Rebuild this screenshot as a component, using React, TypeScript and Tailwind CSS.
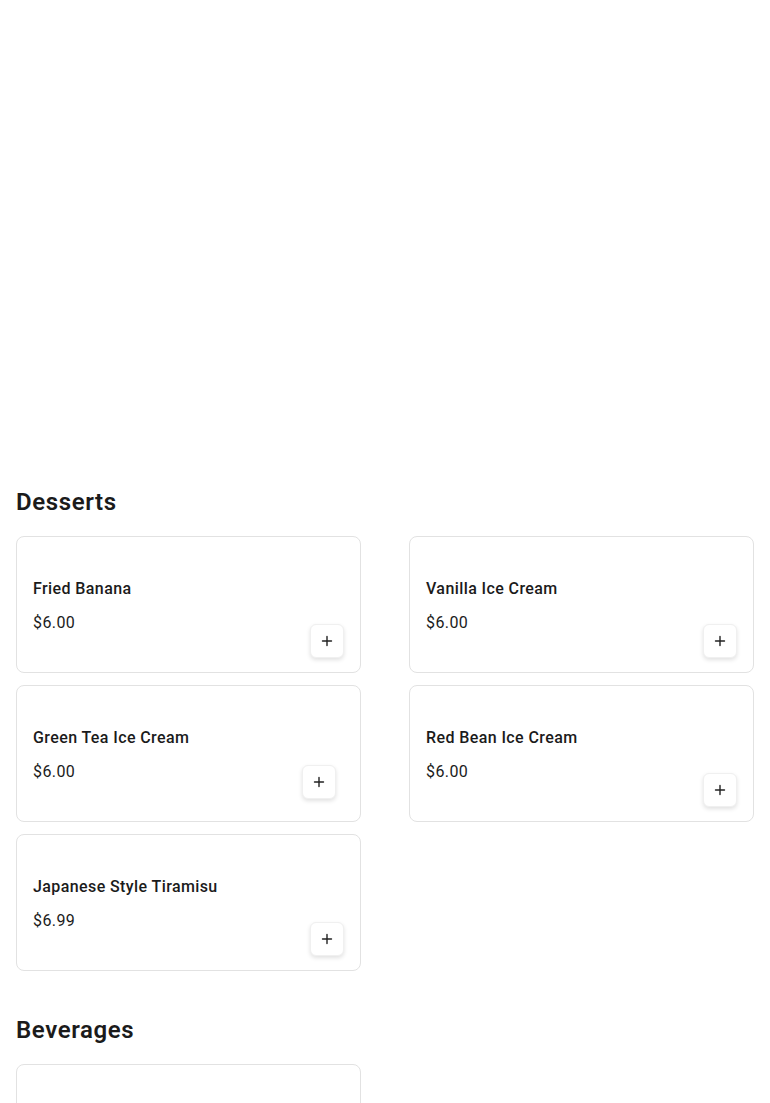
import React from "react";

type Item = { name: string; price: string; btn: string };

const sections: { title: string; items: Item[] }[] = [
	{
		title: "Desserts",
		items: [
			{ name: "Fried Banana", price: "$6.00", btn: "right-4 bottom-[14px]" },
			{ name: "Vanilla Ice Cream", price: "$6.00", btn: "right-4 bottom-[14px]" },
			{ name: "Green Tea Ice Cream", price: "$6.00", btn: "right-6 bottom-[22px]" },
			{ name: "Red Bean Ice Cream", price: "$6.00", btn: "right-4 bottom-[14px]" },
			{ name: "Japanese Style Tiramisu", price: "$6.99", btn: "right-4 bottom-[14px]" },
		],
	},
	{
		title: "Beverages",
		items: [{ name: "", price: "", btn: "" }],
	},
];

function PlusIcon() {
	return (
		<svg width="12" height="12" viewBox="0 0 12 12" fill="none" stroke="#222" strokeWidth="1.4" strokeLinecap="round">
			<path d="M6 1.5v9M1.5 6h9" />
		</svg>
	);
}

function MenuCard({ item }: { item: Item }) {
	return (
		<div className="relative h-[137px] border border-[#e2e2e2] rounded-lg bg-white px-4 pt-[40px]">
			{item.name && (
				<>
					<div className="text-base leading-6 font-medium tracking-wide text-[#1b1b1b]">{item.name}</div>
					<div className="mt-[10px] text-base leading-6 tracking-wide text-[#1b1b1b]">{item.price}</div>
					<button
						className={`absolute ${item.btn} w-[34px] h-[34px] flex items-center justify-center bg-white rounded-md border border-[#f0f0f0] shadow-[0_2px_4px_rgba(0,0,0,0.12)]`}
					>
						<PlusIcon />
					</button>
				</>
			)}
		</div>
	);
}

export default function App() {
	return (
		<div className="bg-white min-h-screen font-['Roboto',sans-serif] text-[#1b1b1b]">
			<div className="h-[486px]" />
			<div className="px-4 flex flex-col gap-[43px]">
				{sections.map((section) => (
					<section key={section.title}>
						<h2 className="text-2xl leading-8 font-semibold tracking-wide mb-[18px]">{section.title}</h2>
						<div className="grid grid-cols-2 gap-x-12 gap-y-3">
							{section.items.map((item, i) => (
								<MenuCard key={i} item={item} />
							))}
						</div>
					</section>
				))}
			</div>
		</div>
	);
}
